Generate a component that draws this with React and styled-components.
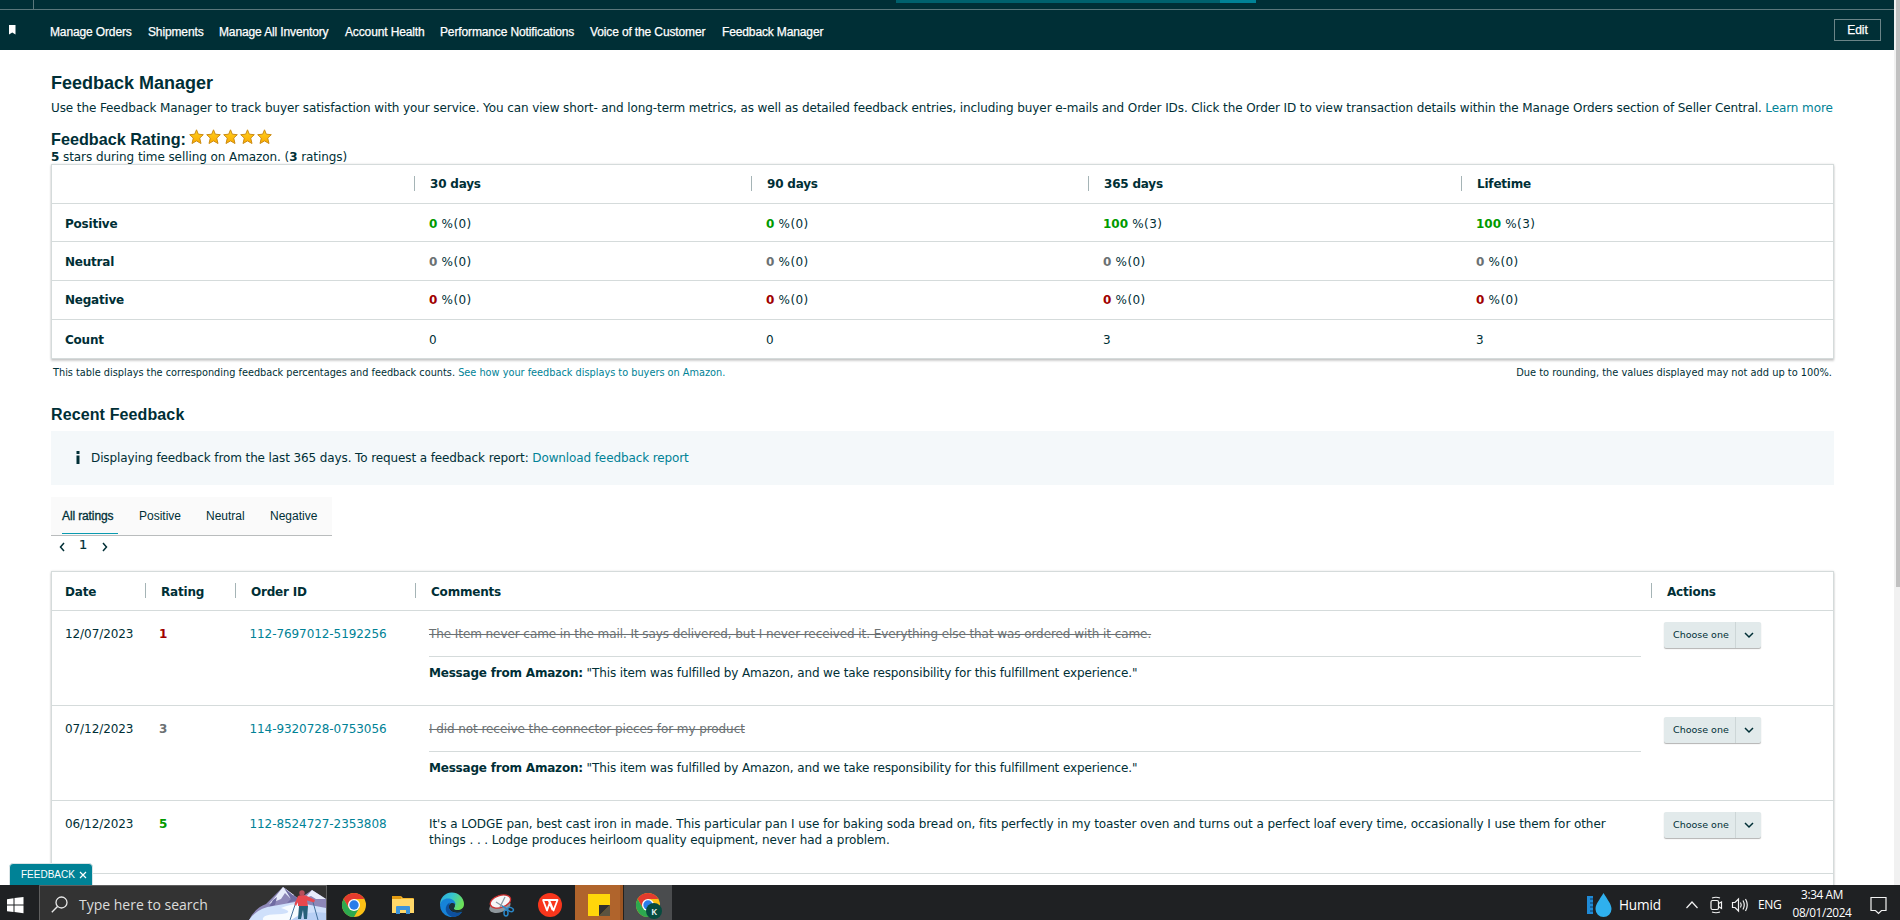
import React from "react";
import styled, { createGlobalStyle, css } from "styled-components";

const Global = createGlobalStyle`
  * { box-sizing: border-box; }
  body { margin: 0; overflow: hidden; background: #fff; }
`;

const ink = "#002f36";
const teal = "#008296";
const line = "#d5dbdb";
const verdana = `"DejaVu Sans", Verdana, sans-serif`;
const arial = `"Liberation Sans", Arial, sans-serif`;
const segoe = `"Open Sans", "Segoe UI", sans-serif`;

const Screen = styled.div`
  width: 1900px;
  height: 920px;
  display: flex;
  flex-direction: column;
  overflow: hidden;
  font-family: ${verdana};
  font-size: 12px;
  color: ${ink};
  white-space: nowrap;
`;
const Browser = styled.div`
  position: relative;
  height: 885px;
  flex: none;
  display: flex;
  overflow: hidden;
`;
const Page = styled.div`
  width: 1894px;
  flex: none;
`;
const ScrollTrack = styled.div`
  width: 6px;
  padding-left: 2px;
  background: #f1f1f1;
`;
const ScrollThumb = styled.div`
  height: 587px;
  background: #c1c1c1;
`;

/* Header */
const HeaderTop = styled.div`
  height: 10px;
  display: flex;
  background: ${ink};
  border-bottom: 1px solid #5b777b;
`;
const HeaderCell = styled.div`
  width: 34px;
  border-right: 1px solid #5b777b;
`;
const SearchStrip = styled.div`
  margin-left: 862px;
  width: 360px;
  height: 3px;
  background: linear-gradient(to right, #00616d 324px, #008296 324px);
`;
const NavBar = styled.nav`
  height: 40px;
  display: flex;
  align-items: flex-start;
  background: ${ink};
  color: #fff;
  font: 12px/20px ${arial};
  -webkit-text-stroke: 0.25px #fff;
`;
const BookmarkBox = styled.div`
  width: 50px;
  padding: 15px 0 0 8px;
  line-height: 0;
`;
const NavLink = styled.a`
  width: ${(p) => p.$w}px;
  margin-top: 12px;
  letter-spacing: -0.13px;
`;
const EditButton = styled.button`
  margin: 9px 13px 0 auto;
  width: 47px;
  height: 22px;
  padding: 0;
  border: 1px solid #6b8588;
  background: transparent;
  color: #fff;
  font: 12px/20px ${arial};
`;

/* Content */
const Content = styled.main`
  width: 1783px;
  margin-left: 51px;
`;
const Title = styled.h1`
  margin: 22px 0 0;
  font: bold 18px/22px ${arial};
`;
const Intro = styled.p`
  margin: 6px 0 0;
  line-height: 16px;
  letter-spacing: -0.101px;
`;
const Link = styled.a`
  color: ${teal};
`;
const RatingLine = styled.div`
  display: flex;
  margin-top: 14px;
  height: 20px;
  gap: 3px;
`;
const RatingTitle = styled.h2`
  margin: 0;
  font: bold 16.2px/19px ${arial};
`;
const Stars = styled.div`
  display: flex;
  gap: 1px;
  margin-top: -1px;
`;
const Summary = styled.div`
  height: 15px;
  line-height: 16px;
  margin-top: -1px;
  letter-spacing: -0.075px;
`;
const Table = styled.div`
  border: 1px solid ${line};
  box-shadow: 0 2px 2px rgba(0, 0, 0, 0.18), 0 0 2px rgba(0, 0, 0, 0.12);
  background: #fff;
`;
const MetricRow = styled.div`
  display: grid;
  grid-template-columns: 362px 337px 337px 373px 1fr;
  height: ${(p) => p.$h}px;
  line-height: ${(p) => p.$lh}px;
  & + & { border-top: 1px solid ${line}; }
`;
const RowName = styled.div`
  padding-left: 13px;
  font-weight: bold;
  letter-spacing: -0.22px;
`;
const Cell = styled.div`
  padding-left: 15px;
`;
const Share = styled.span`
  letter-spacing: 0.4px;
`;
const HeadCell = styled.div`
  display: flex;
  font-weight: bold;
  letter-spacing: -0.2px;
  padding-left: ${(p) => p.$pad || 0}px;
  &::before {
    content: "";
    display: ${(p) => (p.$pad ? "none" : "block")};
    width: 1px;
    height: 15px;
    margin: 11px 15px 0 0;
    background: #a5b4b6;
  }
`;
const tones = { good: "#009a00", flat: "#6b7173", bad: "#a00000" };
const Score = styled.b`
  color: ${(p) => tones[p.$tone]};
`;
const Notes = styled.div`
  display: flex;
  justify-content: space-between;
  margin-top: 5px;
  padding: 0 2px;
  height: 16px;
  font-size: 9.75px;
  line-height: 18px;
`;
const RoundingNote = styled.span`
  font-size: 9.84px;
`;
const SectionTitle = styled.h2`
  margin: 25px 0 0;
  font: bold 16px/20px ${arial};
  letter-spacing: 0.12px;
`;
const InfoBox = styled.div`
  display: flex;
  height: 54px;
  margin-top: 6px;
  padding-left: 25px;
  background: #f4f8fa;
  line-height: 55px;
  letter-spacing: -0.11px;
`;
const InfoMark = styled.svg`
  width: 4px;
  height: 14px;
  margin: 20px 11px 0 0;
`;
const Tabs = styled.div`
  display: flex;
  width: 281px;
  height: 39px;
  margin-top: 12px;
  padding-left: 11px;
  background: #fafafa;
  border-bottom: 1px solid #b9bcbd;
  font: 12px/38px ${arial};
`;
const Tab = styled.div`
  width: ${(p) => p.$w}px;
  margin-right: ${(p) => p.$gap}px;
  height: 37px;
  ${(p) => p.$active && css`
    border-bottom: 1px solid #0a9bb0;
    letter-spacing: -0.12px;
    -webkit-text-stroke: 0.3px ${ink};
  `}
`;
const Pager = styled.div`
  display: flex;
  height: 35px;
  padding: 0 0 0 8px;
  line-height: 18px;
  font-size: 13px;
  svg { margin-top: 6px; }
  span { margin: 0 15px 0 14px; -webkit-text-stroke: 0.2px ${ink}; }
`;
const FeedRow = styled.div`
  display: grid;
  grid-template-columns: 93px 90px 180px 1236px 1fr;
  height: ${(p) => p.$h}px;
  & + & { border-top: 1px solid ${line}; }
`;
const FeedHead = styled(FeedRow)`
  line-height: 40px;
`;
const FeedCell = styled.div`
  padding: 15px 0 0 ${(p) => p.$pad}px;
  line-height: 16px;
  letter-spacing: -0.075px;
`;
const Struck = styled.div`
  color: #6b7173;
  text-decoration: line-through;
`;
const Message = styled.div`
  width: 1212px;
  margin-top: 14px;
  padding-top: 8px;
  border-top: 1px solid ${line};
  letter-spacing: -0.12px;
  b { letter-spacing: -0.2px; }
`;
const Dropdown = styled.button`
  display: flex;
  width: 97px;
  height: 26px;
  margin: -4px 0 0;
  padding: 0;
  border: 0;
  border-radius: 2px;
  background: #e2eaeb;
  box-shadow: 0 1px 1px rgba(0, 0, 0, 0.3);
  color: ${ink};
  font: 9.5px/25px ${verdana};
`;
const DropLabel = styled.span`
  width: 72px;
  padding-left: 9px;
  text-align: left;
  border-right: 1px solid #cdd6d7;
`;
const DropArrow = styled.span`
  flex: 1;
  display: flex;
  height: 26px;
  align-items: center;
  justify-content: center;
`;
const FeedbackTab = styled.div`
  position: absolute;
  left: 9px;
  top: 863px;
  width: 84px;
  height: 24px;
  display: flex;
  gap: 4px;
  padding-left: 11px;
  align-items: center;
  border: 1px solid #d9e4e6;
  border-radius: 4px 4px 0 0;
  background: ${teal};
  color: #fff;
  font: 10px/22px ${arial};
`;

/* Taskbar */
const Taskbar = styled.footer`
  height: 35px;
  flex: none;
  display: flex;
  background: #1f2123;
  color: #fff;
  font-family: ${segoe};
`;
const TaskItem = styled.div`
  flex: none;
  width: ${(p) => p.$w}px;
  height: 35px;
  padding-left: ${(p) => p.$pad || 0}px;
  background: ${(p) => p.$bg || "transparent"};
  line-height: 0;
`;
const SearchBox = styled.div`
  flex: none;
  width: 288px;
  height: 36px;
  display: flex;
  justify-content: space-between;
  background: #333;
  border: 1px solid #5f5f5f;
  color: #dcdcdc;
  font-size: 14px;
  line-height: 38px;
`;
const SearchLabel = styled.div`
  display: flex;
  padding-left: 11px;
  gap: 11px;
  svg { margin-top: 10px; }
`;
const Tray = styled.div`
  flex: none;
  margin-left: auto;
  display: flex;
  width: 315px;
`;
const TrayText = styled.div`
  width: ${(p) => p.$w}px;
  font-size: ${(p) => p.$size}px;
  line-height: 39px;
  letter-spacing: ${(p) => p.$ls || 0}px;
`;
const Clock = styled.div`
  width: 76px;
  margin-right: 2px;
  text-align: center;
  font-size: 11.8px;
  line-height: 18px;
  letter-spacing: -0.38px;
`;

const Star = () => (
  <svg width="16" height="16" viewBox="0 0 16 16">
    <defs>
      <linearGradient id="gold" x1="0" y1="0" x2="0" y2="1">
        <stop offset="0" stopColor="#ffd21f" />
        <stop offset="1" stopColor="#fbaa00" />
      </linearGradient>
    </defs>
    <path d="M7.500 0.800 9.300 5.200 14.300 5.700 10.700 9.100 12 14.500 7.500 11.900 3 14.500 4.300 9.100 0.700 5.700 5.700 5.200Z" fill="url(#gold)" stroke="#cc8c14" strokeWidth="1" strokeLinejoin="round" />
  </svg>
);

const Caret = ({ d, w = 6, h = 10 }) => (
  <svg width={w} height={h} viewBox={`0 0 ${w} ${h}`}>
    <path d={d} fill="none" stroke={ink} strokeWidth="1.5" />
  </svg>
);

const ChromeMark = ({ cx, cy }) => (
  <g transform={`translate(${cx} ${cy})`}>
    <circle r="12" fill="#fbc116" />
    <path d="M-10.4-6A12 12 0 0 1 10.4-6L0-6-5.2 3Z" fill="#e33b2e" />
    <path d="M-10.4-6A12 12 0 0 0 0 12L5.2 3-5.2 3Z" fill="#2da94f" />
    <circle r="6" fill="#fff" />
    <circle r="4.7" fill="#2a7de9" />
  </g>
);

const Skier = () => (
  <svg width="77" height="34" viewBox="0 0 77 34">
    <path d="M0 34Q6 22 17 18L34 1 50 13 63 4 77 13V34Z" fill="#8d87b8" />
    <path d="M34 1 27 10 20 18 32 13 36 7 41 12 45 9ZM63 4 56 12 62 10 67 13 77 13Z" fill="#e8ecfb" />
    <path d="M35 2 42 13 38 17 50 14ZM24 14 28 11 26 19 20 21Z" fill="#6f6ba2" />
    <path d="M0 34Q8 22 24 20L46 16 77 22V34Z" fill="#cfe0fb" />
    <path d="M14 34Q12 28 33 28 46 26 32 22 46 16 60 19L44 34Z" fill="#f7fbff" />
    <path d="M42 34Q58 24 77 27V34Z" fill="#b8d0f5" />
    <path d="M47 16 41 34M64 16 69 34" stroke="#426f9b" strokeWidth="1" />
    <path d="M49 10Q53 8 58 10L66 14 65 16.500 58 14.500 59 20H49L49 16 47 20 45.500 18Z" fill="#e8474e" />
    <circle cx="53" cy="7" r="2.700" fill="#b84e5b" />
    <path d="M50 20H59L58 33H55L54 24 52 33H49Z" fill="#25607a" />
  </svg>
);

const AppIcons = () => (
  <svg width="248" height="35" viewBox="327 0 248 35">
    <defs>
      <linearGradient id="edgeTop" x1="0" y1="0" x2="1" y2="0.4">
        <stop offset="0" stopColor="#2aa9e0" />
        <stop offset="0.5" stopColor="#36c5cf" />
        <stop offset="1" stopColor="#6be05a" />
      </linearGradient>
    </defs>
    <ChromeMark cx="354" cy="20" />
    <path d="M392 11H401L403 13H413Q414 13 414 14V28H392Z" fill="#f5b82e" />
    <path d="M392 14H414V28H392Z" fill="#ffd869" />
    <path d="M392 11H401V14H392Z" fill="#e29b12" />
    <path d="M396 29V22Q396 21 397 21H409Q410 21 410 22V29H406V25H400V29Z" fill="#3d94d9" />
    <g transform="translate(452 20)">
      <path d="M-12 0A12 12 0 0 1 12-1C12 3.500 8.500 5.500 4 5 1 4.500 1.500 3.500 2.500 2 3.500 0-1-5-5-4.500-9-4-11-2-12 0Z" fill="url(#edgeTop)" />
      <path d="M-12 0C-11-5-7-7-3-6.500 1-6 4-3 3.500 0 1-3-3-2-3 2-3 7 4 9 10 6.700A12 12 0 0 1-12 0Z" fill="#1683d8" />
      <path d="M-2-2.500C-8 0-8 9 0 12 5 12 8 10 10.200 6.700 4 9-3 7-3 2-3 0-2.500-1.500-2-2.500Z" fill="#0d509f" />
      <path d="M2.800-1.200C0-3-3-1-2.800 2-2.500 6 4 9 10.300 6.500L10.800 4.500C7 6 2 5.500 1.800 3.800 2 2.500 3.500 1.500 2.800-1.200Z" fill="#1a3038" />
    </g>
    <g transform="translate(501 20)">
      <ellipse cx="-1.500" cy="1" rx="11" ry="6" transform="rotate(-18)" fill="#8f979c" />
      <ellipse cx="0.500" cy="-3.500" rx="10.500" ry="6" transform="rotate(-18)" fill="#f7f7f8" stroke="#cf3030" strokeWidth="1.300" />
      <path d="M-5-3 6 4M4-8-1 2" stroke="#8a9aa4" strokeWidth="1.300" />
      <path d="M1 1 6 4" stroke="#2a88c9" strokeWidth="1.500" />
      <ellipse cx="5" cy="8" rx="2" ry="3" fill="none" stroke="#2a88c9" strokeWidth="1.500" />
      <ellipse cx="9.500" cy="4.500" rx="3" ry="2" transform="rotate(20 9.500 4.500)" fill="none" stroke="#2a88c9" strokeWidth="1.500" />
    </g>
    <circle cx="550" cy="20" r="12" fill="#f8361c" />
    <path d="M542.500 15H555.500L557.500 15 553.500 25.500 550 17 547 25.500 543 15M548.500 15 552.500 25" fill="none" stroke="#fff" strokeWidth="1.800" strokeLinejoin="round" />
  </svg>
);

const metrics = [
  ["Positive", "good", ["0", "0"], ["0", "0"], ["100", "3"], ["100", "3"], 38, 40],
  ["Neutral", "flat", ["0", "0"], ["0", "0"], ["0", "0"], ["0", "0"], 39, 40],
  ["Negative", "bad", ["0", "0"], ["0", "0"], ["0", "0"], ["0", "0"], 39, 39],
];

const amazonNote = `"This item was fulfilled by Amazon, and we take responsibility for this fulfillment experience."`;

const ChooseOne = () => (
  <Dropdown>
    <DropLabel>Choose one</DropLabel>
    <DropArrow><Caret w={10} h={7} d="M1 1 5 5 9 1" /></DropArrow>
  </Dropdown>
);

const FeedEntry = ({ date, rating, tone, order, children, h = 95 }) => (
  <FeedRow $h={h}>
    <FeedCell $pad={13}>{date}</FeedCell>
    <FeedCell $pad={14}><Score $tone={tone}>{rating}</Score></FeedCell>
    <FeedCell $pad={14.5}><Link>{order}</Link></FeedCell>
    <FeedCell $pad={14}>{children}</FeedCell>
    <FeedCell $pad={13}><ChooseOne /></FeedCell>
  </FeedRow>
);

export default function App() {
  return (
    <Screen>
      <Global />
      <Browser>
        <Page>
          <HeaderTop><HeaderCell /><SearchStrip /></HeaderTop>
          <NavBar>
            <BookmarkBox>
              <svg width="8" height="10" viewBox="0 0 8 10"><path d="M1 0H7.500V9.500L4.250 7.500 1 9.500Z" fill="#fff" /></svg>
            </BookmarkBox>
            <NavLink $w={98}>Manage Orders</NavLink>
            <NavLink $w={71}>Shipments</NavLink>
            <NavLink $w={126}>Manage All Inventory</NavLink>
            <NavLink $w={95}>Account Health</NavLink>
            <NavLink $w={150}>Performance Notifications</NavLink>
            <NavLink $w={132}>Voice of the Customer</NavLink>
            <NavLink $w={120}>Feedback Manager</NavLink>
            <EditButton>Edit</EditButton>
          </NavBar>
          <Content>
            <Title>Feedback Manager</Title>
            <Intro>
              Use the Feedback Manager to track buyer satisfaction with your service. You can view short- and long-term metrics, as well as detailed feedback entries, including buyer e-mails and Order IDs. Click the Order ID to view transaction details within the Manage Orders section of Seller Central. <Link>Learn more</Link>
            </Intro>
            <RatingLine>
              <RatingTitle>Feedback Rating:</RatingTitle>
              <Stars><Star /><Star /><Star /><Star /><Star /></Stars>
            </RatingLine>
            <Summary><b>5</b> stars during time selling on Amazon. (<b>3</b> ratings)</Summary>
            <Table>
              <MetricRow $h={38} $lh={39}>
                <div />
                <HeadCell>30 days</HeadCell>
                <HeadCell>90 days</HeadCell>
                <HeadCell>365 days</HeadCell>
                <HeadCell>Lifetime</HeadCell>
              </MetricRow>
              {metrics.map(([name, tone, a, b, c, d, h, lh]) => (
                <MetricRow key={name} $h={h} $lh={lh}>
                  <RowName>{name}</RowName>
                  {[a, b, c, d].map(([pct, n], i) => (
                    <Cell key={i}><Score $tone={tone}>{pct}</Score><Share> %({n})</Share></Cell>
                  ))}
                </MetricRow>
              ))}
              <MetricRow $h={39} $lh={40}>
                <RowName>Count</RowName>
                <Cell>0</Cell><Cell>0</Cell><Cell>3</Cell><Cell>3</Cell>
              </MetricRow>
            </Table>
            <Notes>
              <span>This table displays the corresponding feedback percentages and feedback counts. <Link>See how your feedback displays to buyers on Amazon.</Link></span>
              <RoundingNote>Due to rounding, the values displayed may not add up to 100%.</RoundingNote>
            </Notes>
            <SectionTitle>Recent Feedback</SectionTitle>
            <InfoBox>
              <InfoMark viewBox="0 0 4 14"><path d="M0.500 0H3.500V3H0.500ZM0.500 4.500H3.500V13H0.500Z" fill={ink} /></InfoMark>
              <span>Displaying feedback from the last 365 days. To request a feedback report: <Link>Download feedback report</Link></span>
            </InfoBox>
            <Tabs>
              <Tab $w={56} $gap={21} $active>All ratings</Tab>
              <Tab $w={42} $gap={25}>Positive</Tab>
              <Tab $w={39} $gap={25}>Neutral</Tab>
              <Tab $w={46} $gap={0}>Negative</Tab>
            </Tabs>
            <Pager>
              <Caret d="M5 1 1.500 5 5 9" /><span>1</span><Caret d="M1 1 4.500 5 1 9" />
            </Pager>
            <Table>
              <FeedHead $h={38}>
                <HeadCell $pad={13}>Date</HeadCell>
                <HeadCell>Rating</HeadCell>
                <HeadCell>Order ID</HeadCell>
                <HeadCell>Comments</HeadCell>
                <HeadCell>Actions</HeadCell>
              </FeedHead>
              <FeedEntry date="12/07/2023" rating="1" tone="bad" order="112-7697012-5192256">
                <Struck>The Item never came in the mail. It says delivered, but I never received it. Everything else that was ordered with it came.</Struck>
                <Message><b>Message from Amazon:</b> {amazonNote}</Message>
              </FeedEntry>
              <FeedEntry date="07/12/2023" rating="3" tone="flat" order="114-9320728-0753056">
                <Struck>I did not receive the connector pieces for my product</Struck>
                <Message><b>Message from Amazon:</b> {amazonNote}</Message>
              </FeedEntry>
              <FeedEntry date="06/12/2023" rating="5" tone="good" order="112-8524727-2353808" h={73}>
                It's a LODGE pan, best cast iron in made. This particular pan I use for baking soda bread on, fits perfectly in my toaster oven and turns out a perfect loaf every time, occasionally I use them for other<br />
                things . . . Lodge produces heirloom quality equipment, never had a problem.
              </FeedEntry>
              <FeedRow $h={60} />
            </Table>
          </Content>
        </Page>
        <ScrollTrack><ScrollThumb /></ScrollTrack>
        <FeedbackTab>
          FEEDBACK
          <svg width="8" height="8" viewBox="0 0 8 8"><path d="M1 1 7 7M7 1 1 7" stroke="#fff" strokeWidth="1.200" /></svg>
        </FeedbackTab>
      </Browser>
      <Taskbar>
        <TaskItem $w={39} $pad={7}>
          <svg width="17" height="35" viewBox="0 0 17 35"><path d="M0 14.200 6.500 13.300V19.600H0ZM7.500 13.100 16.500 12V19.600H7.500ZM0 20.600H6.500V27L0 26.200ZM7.500 20.600H16.500V28.300L7.500 27.100Z" fill="#fff" /></svg>
        </TaskItem>
        <SearchBox>
          <SearchLabel>
            <svg width="17" height="17" viewBox="0 0 17 17"><circle cx="10.500" cy="6.500" r="5.500" fill="none" stroke="#e8e8e8" strokeWidth="1.300" /><path d="M6.500 10.500 0.800 16.200" stroke="#e8e8e8" strokeWidth="1.400" /></svg>
            Type here to search
          </SearchLabel>
          <Skier />
        </SearchBox>
        <TaskItem $w={248}><AppIcons /></TaskItem>
        <TaskItem $w={49} $pad={13} $bg="linear-gradient(to right, #b0642c 45px, #9c5522 45px, #9c5522 48px, #23221f 48px)">
          <svg width="22" height="35" viewBox="0 0 22 35"><path d="M0 9H22V20L11 31H0Z" fill="#ffd60a" /><path d="M22 20V31H11Z" fill="#5b5340" /><path d="M11 20H22L11 31Z" fill="#2f2f2f" /></svg>
        </TaskItem>
        <TaskItem $w={48} $bg="#4a4c4e">
          <svg width="48" height="35" viewBox="0 0 48 35">
            <ChromeMark cx="24" cy="20" />
            <circle cx="30" cy="26" r="8" fill="#064b3f" />
            <text x="30" y="29.500" textAnchor="middle" fontSize="9" fontWeight="600" fill="#fff">K</text>
          </svg>
        </TaskItem>
        <Tray>
          <TaskItem $w={34}>
            <svg width="28" height="35" viewBox="0 0 28 35">
              <path d="M2 11H8V29H2Z" fill="#1f8ad6" /><path d="M5 14H8M5 18H8M5 22H8M5 26H8" stroke="#0c3d66" />
              <path d="M18.500 8C22 14 26.500 19 26.500 24A8 8 0 0 1 10.500 24C10.500 19 15 14 18.500 8Z" fill="#2fb0ee" />
            </svg>
          </TaskItem>
          <TrayText $w={67} $size={13.6} $ls={-0.15}>Humid</TrayText>
          <TaskItem $w={72}>
            <svg width="66" height="35" viewBox="1686 0 66 35" fill="none" stroke="#f2f2f2" strokeWidth="1.200">
              <path d="M1686.500 23 1692 17 1697.500 23" />
              <rect x="1711" y="15.500" width="7.500" height="9" rx="1.500" />
              <path d="M1718.500 18.500 1721.500 17V23.500L1718.500 21.500M1712 13Q1716 11.500 1720 13M1712 27Q1716 28.500 1720 27" />
              <path d="M1732.500 17.500H1735L1738.500 14V26L1735 22.500H1732.500ZM1740.500 17.500Q1742 20 1740.500 22.500M1743 15.500Q1745.500 20 1743 24.500M1745.500 14Q1749 20 1745.500 26" />
            </svg>
          </TaskItem>
          <TrayText $w={26} $size={12} $ls={-0.3}>ENG</TrayText>
          <Clock>3:34 AM<br />08/01/2024</Clock>
          <TaskItem $w={30} $pad={8}>
            <svg width="18" height="35" viewBox="0 0 18 35"><path d="M1 12.500H16V25.500H11.500L8.500 28.500 5.500 25.500H1Z" fill="none" stroke="#f2f2f2" strokeWidth="1.200" /></svg>
          </TaskItem>
        </Tray>
      </Taskbar>
    </Screen>
  );
}
